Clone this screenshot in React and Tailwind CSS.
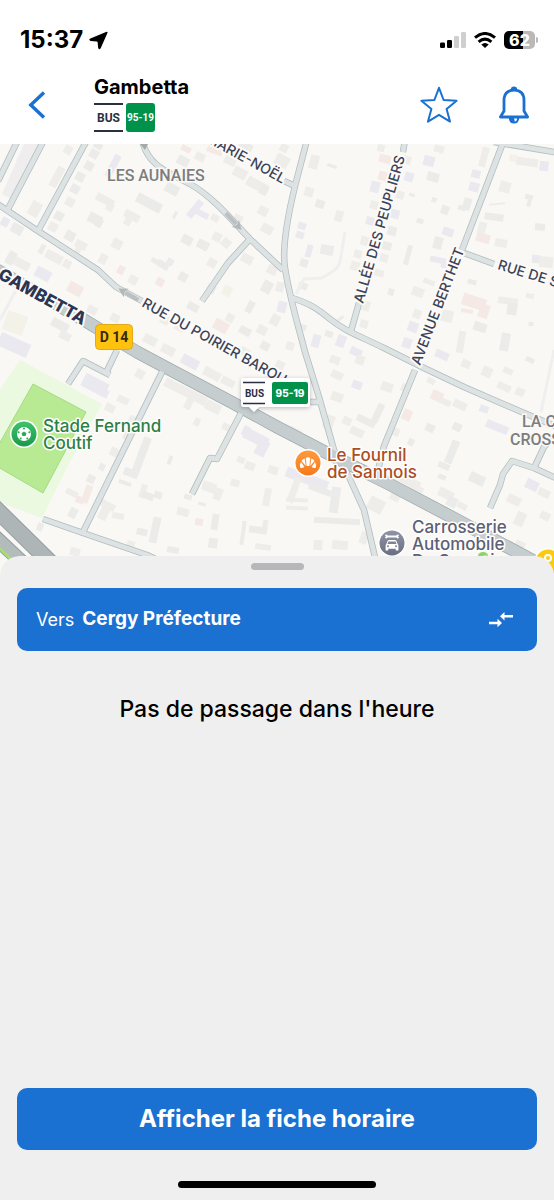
import React, { useState } from "react";

const MAIN_ROAD = "M-10 266 L84 320 L137 352 L167 368 L233 403 L277 427 L327 453 L387 483 L444 513 L530 559 L560 575";

const ROADS = [
    "M-4 203 L38 231 L98 270 L116 287 L142 301",
    "M18 140 L-2 181",
    "M44 140 L8 209",
    "M87 140 L38 231",
    "M142 140 C147 162 160 169 190 184 C215 198 235 224 250 239 L283 270",
    "M250 239 L228 263 L202 301",
    "M307 140 L295 186 C288 215 282 250 285 268 C290 300 300 332 305 352 L319 397 L334 450 L349 477 L364 510 L374 553 L380 580",
    "M292 298 C312 304 320 311 330 319 C345 331 355 334 384 348 L424 368 L464 387 L524 413 L560 428",
    "M405 140 L403 152",
    "M359 303 L351 331",
    "M504 140 L462 250",
    "M415 370 L384 446 L378 470",
    "M494 142 L560 153",
    "M464 253 L494 264",
    "M284 181 L295 186",
    "M163 370 L83 532",
    "M117 350 L106 373",
    "M68 384 L83 361 L110 375",
    "M241 413 L217 459 L210 458 L192 494",
    "M43 519 L83 533 L147 555 L170 566",
    "M309 402 L320 402",
    "M490 508 L500 485 L503 474 L512 461 L534 468 L560 480",
    "M534 468 L544 447 L560 430",
];

const TONES = {
    g: "#ebebe9",
    w: "#efede9",
    l: "#eae9f0",
    p: "#f5e9e6",
    y: "#f3f1e8",
};

// [cx, cy, width, height, angle, tone]
const BUILDINGS = [
    [35, 209, 11, 15, 28, "w"], [57, 177, 8, 22, 28, "w"], [68, 150, 8, 9, 28, "w"], [89, 166, 9, 9, 28, "g"],
    [80, 177, 9, 9, 28, "g"], [75, 189, 9, 9, 28, "g"], [70, 202, 9, 9, 28, "w"], [59, 216, 9, 9, 28, "g"],
    [53, 227, 9, 9, 28, "w"], [94, 154, 9, 9, 28, "g"], [98, 146, 9, 6, 28, "g"], [105, 200, 19, 8, 28, "w"],
    [110, 207, 7, 8, 28, "w"], [149, 203, 27, 10, 28, "g"], [95, 219, 14, 10, 28, "g"], [99, 223, 7, 9, 28, "g"],
    [132, 216, 16, 8, 28, "w"], [128, 221, 7, 9, 28, "w"], [175, 215, 3, 8, 28, "g"], [117, 244, 10, 10, 28, "w"],
    [70, 236, 10, 10, 28, "g"], [81, 245, 12, 8, 28, "w"], [78, 250, 6, 6, 28, "w"], [42, 249, 5, 10, 28, "g"],
    [54, 257, 18, 9, 28, "w"], [67, 264, 8, 8, 28, "w"], [18, 262, 25, 9, 28, "w"], [11, 258, 8, 14, 28, "g"],
    [43, 274, 16, 11, 28, "l"], [17, 229, 12, 10, 28, "g"], [5, 222, 8, 9, 28, "l"], [75, 289, 15, 11, 28, "p"],
    [103, 259, 8, 10, 28, "w"], [121, 270, 7, 9, 28, "p"], [133, 280, 9, 9, 28, "w"], [163, 265, 12, 7, 28, "g"],
    [155, 261, 8, 5, 28, "g"], [170, 262, 7, 7, 28, "g"], [183, 277, 9, 9, 28, "g"], [160, 282, 8, 8, 28, "p"],
    [187, 240, 11, 9, 28, "g"], [203, 245, 12, 9, 28, "g"], [226, 243, 9, 9, 40, "w"], [247, 259, 12, 9, 28, "w"],
    [227, 291, 9, 10, 28, "y"], [211, 289, 9, 9, 28, "w"], [212, 263, 9, 9, 28, "w"], [250, 307, 7, 12, 28, "g"],
    [267, 287, 10, 12, 28, "g"], [272, 270, 10, 9, 28, "w"], [193, 307, 12, 8, 28, "g"], [221, 326, 15, 11, 28, "p"],
    [230, 318, 8, 9, 28, "w"], [245, 331, 12, 8, 28, "g"], [240, 173, 14, 10, 28, "w"], [230, 161, 12, 8, 28, "w"],
    [257, 185, 22, 10, 28, "w"], [264, 190, 8, 10, 28, "g"], [195, 209, 20, 7, -50, "l"], [202, 214, 14, 6, 28, "l"],
    [172, 189, 14, 10, 28, "g"], [183, 161, 12, 9, 28, "g"], [200, 157, 10, 8, 28, "w"], [217, 237, 9, 9, 28, "w"],
    [263, 211, 10, 9, 28, "w"], [267, 229, 12, 9, 28, "w"], [113, 166, 7, 24, 28, "l"], [186, 149, 10, 6, 28, "p"],
    [215, 150, 16, 8, 20, "p"], [246, 146, 14, 7, 28, "g"], [238, 219, 9, 9, 28, "w"], [215, 218, 8, 7, 28, "w"],
    [15, 323, 21, 20, 20, "y"], [14, 345, 32, 14, 24, "l"], [60, 325, 18, 9, 28, "g"], [65, 336, 12, 8, 28, "w"],
    [92, 310, 10, 8, 28, "w"], [115, 318, 9, 8, 28, "w"], [165, 320, 9, 9, 28, "w"], [180, 327, 10, 8, 28, "p"],
    [150, 340, 14, 9, 28, "w"], [168, 350, 14, 9, 28, "w"], [190, 362, 18, 10, 28, "l"], [212, 374, 18, 9, 28, "w"],
    [228, 382, 14, 8, 28, "w"], [245, 352, 10, 8, 28, "w"], [262, 330, 10, 9, 28, "w"], [265, 346, 9, 8, 28, "g"],
    [280, 365, 9, 8, 28, "w"], [275, 320, 9, 11, 28, "w"], [314, 162, 9, 14, 15, "w"], [332, 166, 10, 3, 18, "g"],
    [309, 192, 9, 9, 18, "w"], [320, 204, 9, 8, 18, "g"], [339, 216, 8, 11, 15, "w"], [375, 187, 9, 11, 15, "l"],
    [302, 226, 8, 7, 18, "l"], [300, 235, 8, 7, 18, "l"], [327, 250, 13, 10, 10, "g"], [309, 251, 6, 13, 15, "l"],
    [304, 263, 8, 8, 18, "g"], [282, 161, 14, 12, 28, "w"], [284, 148, 8, 8, 28, "w"], [385, 159, 12, 8, 15, "p"],
    [383, 176, 9, 9, 15, "p"], [381, 148, 7, 7, 15, "w"], [409, 177, 9, 9, 15, "l"], [407, 160, 8, 8, 15, "w"],
    [400, 195, 8, 8, 15, "w"], [412, 195, 6, 3, 15, "g"], [374, 205, 8, 8, 15, "w"], [395, 214, 9, 9, 15, "l"],
    [370, 221, 8, 8, 15, "l"], [392, 231, 9, 9, 15, "g"], [365, 241, 9, 9, 15, "w"], [387, 246, 9, 8, 15, "g"],
    [358, 254, 8, 8, 15, "w"], [384, 258, 8, 8, 15, "w"], [355, 266, 9, 9, 15, "w"], [379, 273, 10, 7, 15, "w"],
    [429, 161, 11, 10, 15, "l"], [439, 149, 10, 7, 15, "w"], [433, 177, 12, 9, 15, "g"], [434, 200, 5, 5, 15, "g"],
    [445, 210, 8, 9, 20, "g"], [420, 221, 7, 5, 15, "g"], [448, 232, 11, 8, 20, "l"], [438, 243, 9, 12, 15, "g"],
    [438, 260, 16, 6, 12, "l"], [444, 265, 6, 6, 12, "l"], [408, 255, 5, 20, 15, "g"], [391, 292, 6, 7, 15, "g"],
    [418, 292, 12, 9, 20, "w"], [429, 282, 12, 5, 20, "w"], [474, 187, 10, 9, 15, "l"], [476, 174, 9, 8, 15, "l"],
    [484, 157, 7, 20, 15, "w"], [467, 204, 8, 12, 18, "g"], [462, 208, 8, 5, 18, "g"], [544, 166, 9, 10, 5, "l"],
    [527, 162, 22, 8, 8, "w"], [513, 158, 7, 7, 8, "y"], [505, 187, 11, 11, 15, "w"], [529, 197, 8, 5, 15, "g"],
    [529, 203, 4, 7, 15, "g"], [497, 204, 16, 2, -5, "w"], [494, 217, 19, 7, 8, "g"], [540, 227, 10, 7, 5, "g"],
    [483, 238, 14, 9, 15, "p"], [482, 228, 8, 12, 15, "w"], [501, 243, 12, 8, 10, "w"], [536, 259, 8, 8, 5, "l"],
    [546, 262, 14, 11, 5, "w"], [472, 282, 9, 5, 15, "g"], [474, 302, 24, 12, 18, "p"], [484, 311, 10, 14, 18, "p"],
    [467, 311, 12, 4, 10, "p"], [508, 301, 20, 7, 8, "w"], [512, 309, 10, 12, 8, "g"], [480, 327, 13, 9, 18, "g"],
    [505, 342, 9, 18, 10, "g"], [461, 342, 7, 22, 10, "w"], [530, 296, 8, 5, 10, "w"], [531, 324, 5, 4, 10, "g"],
    [417, 314, 8, 9, 20, "w"], [413, 327, 10, 10, 20, "l"], [407, 343, 9, 10, 20, "l"], [447, 316, 12, 12, 15, "w"],
    [364, 324, 8, 8, 15, "w"], [366, 306, 8, 10, 15, "w"], [303, 286, 9, 7, 20, "g"], [302, 327, 9, 6, 20, "g"],
    [316, 341, 8, 13, 15, "l"], [341, 341, 9, 12, 20, "l"], [329, 334, 8, 6, 20, "g"], [340, 319, 9, 3, -40, "g"],
    [282, 307, 9, 11, 15, "l"], [280, 287, 8, 10, 15, "w"], [290, 346, 8, 8, 20, "w"], [356, 352, 12, 8, 25, "l"],
    [95, 385, 26, 14, 27, "l"], [104, 393, 9, 8, 27, "l"], [123, 400, 12, 7, 27, "w"], [110, 408, 10, 8, 27, "w"],
    [140, 374, 9, 9, 27, "w"], [133, 420, 9, 8, 27, "w"], [128, 436, 9, 9, 27, "p"], [174, 386, 20, 9, 27, "w"],
    [194, 396, 27, 9, 27, "w"], [213, 407, 16, 10, 27, "w"], [189, 403, 7, 13, 27, "w"], [197, 422, 6, 8, 27, "w"],
    [226, 427, 8, 7, 27, "w"], [256, 438, 26, 11, 27, "l"], [262, 448, 11, 16, 27, "l"], [246, 431, 7, 10, 27, "l"],
    [145, 446, 8, 18, 20, "g"], [139, 462, 8, 24, 20, "g"], [131, 473, 15, 8, 20, "g"], [125, 483, 13, 4, 20, "g"],
    [170, 460, 4, 9, 20, "g"], [102, 467, 6, 7, 27, "g"], [91, 479, 8, 8, 27, "g"], [114, 452, 8, 9, 27, "w"],
    [72, 493, 13, 6, 27, "w"], [87, 494, 7, 18, 20, "p"], [80, 500, 9, 7, 20, "p"], [73, 513, 8, 10, 27, "g"],
    [40, 527, 6, 8, 20, "g"], [107, 505, 17, 7, 27, "w"], [104, 513, 9, 14, 27, "w"], [118, 516, 12, 6, 10, "w"],
    [143, 491, 6, 14, 20, "w"], [148, 496, 12, 7, 20, "g"], [158, 495, 8, 7, 20, "g"], [155, 530, 8, 26, 12, "g"],
    [142, 532, 11, 7, 12, "g"], [188, 497, 8, 5, 15, "g"], [202, 504, 8, 3, 15, "g"], [183, 512, 12, 8, 15, "w"],
    [199, 522, 8, 7, 8, "p"], [215, 522, 7, 16, 8, "g"], [213, 543, 9, 10, 8, "g"], [243, 533, 4, 24, 8, "g"],
    [258, 530, 18, 7, 8, "g"], [265, 526, 5, 12, 8, "g"], [263, 547, 16, 6, 8, "w"], [209, 487, 14, 10, 20, "w"],
    [218, 494, 8, 12, 20, "w"], [235, 483, 9, 7, 15, "w"], [250, 466, 10, 8, 20, "w"], [267, 497, 7, 18, 10, "w"],
    [173, 550, 12, 6, 10, "g"], [75, 552, 10, 8, 15, "w"], [131, 544, 8, 6, 15, "w"], [241, 460, 8, 6, 20, "w"],
    [273, 470, 10, 8, 20, "w"], [337, 375, 12, 8, 27, "w"], [357, 385, 10, 8, 20, "l"], [337, 397, 12, 9, 20, "w"],
    [335, 360, 10, 8, 20, "w"], [360, 360, 9, 9, 20, "w"], [387, 387, 12, 9, 20, "w"], [366, 421, 20, 7, 25, "g"],
    [378, 413, 7, 20, 25, "g"], [357, 432, 14, 8, 25, "w"], [347, 421, 9, 8, 25, "w"], [407, 415, 9, 11, 25, "p"],
    [430, 428, 9, 8, 25, "g"], [457, 427, 9, 8, 25, "g"], [437, 396, 12, 10, 25, "p"], [445, 402, 12, 6, 25, "w"],
    [460, 405, 14, 8, 25, "w"], [484, 409, 9, 7, 20, "l"], [497, 427, 23, 8, 22, "l"], [411, 442, 6, 7, 25, "g"],
    [396, 432, 7, 8, 25, "w"], [452, 452, 8, 24, 22, "g"], [444, 466, 12, 6, 22, "g"], [442, 477, 8, 5, 22, "g"],
    [477, 479, 16, 10, 25, "g"], [532, 485, 13, 10, 25, "l"], [514, 500, 14, 9, 25, "w"], [544, 493, 12, 8, 25, "w"],
    [520, 519, 10, 14, 25, "w"], [545, 516, 10, 8, 25, "w"], [487, 372, 10, 10, 25, "w"], [504, 387, 14, 7, 25, "w"],
    [466, 364, 9, 8, 25, "w"], [442, 355, 14, 8, 25, "l"], [530, 360, 9, 5, 25, "g"], [508, 371, 10, 6, 25, "w"],
    [520, 392, 9, 8, 25, "w"], [431, 381, 8, 6, 25, "w"], [307, 479, 44, 10, 20, "l"], [294, 490, 7, 26, 20, "w"],
    [320, 490, 24, 6, 20, "g"], [335, 500, 9, 26, 8, "g"], [337, 521, 46, 6, 3, "g"], [297, 500, 22, 4, 3, "w"],
    [297, 508, 22, 4, 3, "w"], [376, 505, 16, 14, 27, "w"], [395, 497, 10, 8, 27, "w"], [408, 481, 26, 9, 27, "w"],
    [416, 490, 14, 10, 27, "w"], [446, 494, 16, 9, 27, "w"], [452, 502, 10, 10, 27, "g"], [462, 506, 10, 6, 27, "w"],
    [329, 422, 10, 14, 20, "w"], [340, 545, 16, 9, 5, "w"], [318, 545, 9, 10, 5, "w"], [364, 538, 8, 12, 20, "w"],
    [405, 388, 8, 8, 25, "w"], [288, 396, 9, 9, 20, "w"], [295, 432, 12, 8, 27, "w"], [520, 545, 10, 8, 25, "w"],
];

const STREETS = [
    { name: "RUE DU POIRIER BAROU", x: 141, y: 306, angle: 29 },
    { name: "ALLÉE DES PEUPLIERS", x: 363, y: 304, angle: -74 },
    { name: "AVENUE BERTHET", x: 420, y: 366, angle: -69 },
    { name: "RUE DE S", x: 497, y: 269, angle: 17 },
    { name: "MARIE-NOËL", x: 205, y: 141, angle: 29 },
];

function DirectionArrow({ x, y, angle }) {
    return (
        <g transform={`translate(${x} ${y}) rotate(${angle})`} fill="#b4b8b8">
            <path d="M-12 -2 H3 V2 H-12 Z" opacity="0.8" />
            <path d="M2 -5 L11 0 L2 5 L4 0 Z" />
        </g>
    );
}

function Poi({ x, y, color, labelX, labelY, lines, textColor, children }) {
    return (
        <g>
            <circle cx={x} cy={y} r="14" fill="#fff" />
            <circle cx={x} cy={y} r="12.5" fill={color} />
            <g transform={`translate(${x} ${y})`}>{children}</g>
            <text
                fill={textColor}
                stroke="#fffefb"
                strokeWidth="3"
                strokeLinejoin="round"
                paintOrder="stroke"
                className="text-[17px] font-medium"
            >
                {lines.map((line, i) => (
                    <tspan key={line} x={labelX} y={labelY + i * 17}>{line}</tspan>
                ))}
            </text>
        </g>
    );
}

function StopMap() {
    return (
        <svg
            viewBox="0 144 554 432"
            preserveAspectRatio="xMidYMin slice"
            className="block h-full w-full font-[Inter,sans-serif]"
            role="img"
            aria-label="Plan du quartier"
        >
            <defs>
                <linearGradient id="stade" x1="0" y1="0" x2="0" y2="1">
                    <stop offset="0" stopColor="#3fc26b" />
                    <stop offset="1" stopColor="#189a4a" />
                </linearGradient>
                <linearGradient id="fournil" x1="0" y1="0" x2="0" y2="1">
                    <stop offset="0" stopColor="#ff9a3c" />
                    <stop offset="1" stopColor="#f47a1c" />
                </linearGradient>
                <linearGradient id="garage" x1="0" y1="0" x2="0" y2="1">
                    <stop offset="0" stopColor="#8f94a6" />
                    <stop offset="1" stopColor="#696e82" />
                </linearGradient>
                <filter id="ombre" x="-20%" y="-20%" width="140%" height="160%">
                    <feDropShadow dx="0" dy="1" stdDeviation="2" floodOpacity="0.25" />
                </filter>
            </defs>

            <rect x="-600" y="144" width="1800" height="432" fill="#f9f8f5" />

            {/* Stade */}
            <path d="M-2 392 L20 360 L102 404 L70 462 L42 518 L-2 502 Z" fill="#ebf9e1" />
            <path d="M33 384 L86 412 L43 493 L-2 467 L-2 446 Z" fill="#b8ea93" stroke="#a5da83" strokeWidth="1" />

            {/* Bâtiments */}
            <path d="M24 144 H40 L13 200 L2 194 Z" fill="#f0edef" />
            {BUILDINGS.map(([cx, cy, w, h, angle, tone], i) => (
                <rect
                    key={i}
                    x={cx - w / 2}
                    y={cy - h / 2}
                    width={w}
                    height={h}
                    fill={TONES[tone]}
                    transform={`rotate(${angle} ${cx} ${cy})`}
                />
            ))}
            <path d="M345 232 L340 262 Q338 269 330 273 L322 278 L304 279 L296 294" fill="none" stroke="#efeff0" strokeWidth="3" />
            <path d="M554 350 L541 412 M0 320 L16 290" fill="none" stroke="#f0eff0" strokeWidth="3" />

            {/* Rues */}
            <g fill="none" strokeLinejoin="round">
                <path d="M-6 507 L50 562" stroke="#949ea1" strokeWidth="17" />
                <path d="M-6 507 L50 562" stroke="#aeb5b6" strokeWidth="15" />
                <path d="M-6 536 L26 566" stroke="#949ea1" strokeWidth="15" />
                <path d="M-6 536 L26 566" stroke="#b4bbbc" strokeWidth="13" />
                <path d="M-6 543 L14 562" stroke="#a5dd77" strokeWidth="3" />
                <g stroke="#b0bcc1" strokeWidth="6.5">
                    {ROADS.map((d) => <path key={d} d={d} />)}
                </g>
                <path d={MAIN_ROAD} stroke="#a0adb1" strokeWidth="13" />
                <g stroke="#dde2e2" strokeWidth="5">
                    {ROADS.map((d) => <path key={d} d={d} />)}
                </g>
                <path d={MAIN_ROAD} stroke="#c5cdce" strokeWidth="11.5" />
            </g>

            <DirectionArrow x={234} y={222} angle={47} />
            <DirectionArrow x={128} y={294} angle={210} />
            <path d="M140 144 H148 L145 150 Z" fill="#a4a8a8" />

            {/* Noms de rues */}
            <g
                fill="#3b4257"
                stroke="#fbfaf7"
                strokeWidth="4"
                strokeLinejoin="round"
                paintOrder="stroke"
                className="text-[14px] font-medium"
            >
                {STREETS.map((s) => (
                    <text key={s.name} transform={`translate(${s.x} ${s.y}) rotate(${s.angle})`}>{s.name}</text>
                ))}
                <text
                    transform="translate(-3 278) rotate(29)"
                    fill="#2c3552"
                    className="text-[17px] font-extrabold"
                >
                    GAMBETTA
                </text>
            </g>

            <g
                fill="#7d7d7e"
                stroke="#faf9f6"
                strokeWidth="3"
                paintOrder="stroke"
                className="font-[Roboto,sans-serif] text-[16px] font-medium"
            >
                <text x="107" y="181">LES AUNAIES</text>
                <text x="522" y="427">LA CROIX</text>
                <text x="510" y="445">CROSSE</text>
            </g>

            {/* D 14 */}
            <rect x="95.5" y="324.5" width="37" height="25" rx="4" fill="#ffc20e" stroke="#e2a91b" />
            <text x="114" y="342" textAnchor="middle" fill="#352b14" className="font-[Roboto,sans-serif] text-[14px] font-bold">D 14</text>

            {/* Points d'intérêt */}
            <Poi x={24} y={434} color="url(#stade)" labelX={43} labelY={432} lines={["Stade Fernand", "Coutif"]} textColor="#2c8049">
                <circle r="7" fill="#fff" />
                <path d="M0 -2.6 L2.5 -0.8 L1.5 2.1 H-1.5 L-2.5 -0.8 Z" fill="#27ab57" />
                <g fill="#27ab57">
                    <circle cx="0" cy="-5.6" r="1" />
                    <circle cx="5.3" cy="-1.7" r="1" />
                    <circle cx="3.3" cy="4.5" r="1" />
                    <circle cx="-3.3" cy="4.5" r="1" />
                    <circle cx="-5.3" cy="-1.7" r="1" />
                </g>
            </Poi>
            <Poi x={308} y={463} color="url(#fournil)" labelX={327} labelY={461} lines={["Le Fournil", "de Sannois"]} textColor="#ab4d25">
                <path d="M-2.2 -5 Q0 -6.4 2.2 -5 L1.4 3 H-1.4 Z" fill="#fff" />
                <path d="M-3.2 -4.6 Q-6 -4 -6.4 -2 L-2.3 3 Z M3.2 -4.6 Q6 -4 6.4 -2 L2.3 3 Z" fill="#fff" />
                <path d="M-7 -1 Q-9 2 -7.6 5 Q-5.5 5.4 -3.6 4 Z M7 -1 Q9 2 7.6 5 Q5.5 5.4 3.6 4 Z" fill="#fff" />
            </Poi>
            <ellipse cx="483" cy="556" rx="5" ry="4" fill="#8bd468" />
            <Poi x={392} y={543} color="url(#garage)" labelX={412} labelY={533} lines={["Carrosserie", "Automobile", "De Sannois"]} textColor="#5c6078">
                <path d="M-4.6 -1.8 Q-4 -3 -2.6 -3 H2.6 Q4 -3 4.6 -1.8 L5.6 1 Q6.4 1.6 6.4 2.6 V7.4 H3.8 V5.8 H-3.8 V7.4 H-6.4 V2.6 Q-6.4 1.6 -5.6 1 Z" fill="#fff" />
                <path d="M-3.6 -1.4 H3.6 L4.4 0.9 H-4.4 Z" fill="#7d8296" />
                <circle cx="-4" cy="3.2" r="1" fill="#7d8296" />
                <circle cx="4" cy="3.2" r="1" fill="#7d8296" />
                <path d="M-6.5 -8 L-4.5 -6.5 L-6.5 -5 M6.5 -8 L4.5 -6.5 L6.5 -5 M-4.5 -6.5 H4.5" fill="none" stroke="#fff" strokeWidth="1.8" />
            </Poi>
            <circle cx="548" cy="562" r="14" fill="#fff" />
            <circle cx="548" cy="562" r="12.5" fill="#fbcb12" />
            <circle cx="548" cy="558" r="3" fill="none" stroke="#fff" strokeWidth="2" />

            {/* Arrêt */}
            <g filter="url(#ombre)">
                <path d="M244 378 H307 Q310 378 310 381 V404 Q310 407 307 407 H259 L254 412 L249 407 H244 Q241 407 241 404 V381 Q241 378 244 378 Z" fill="#fff" />
            </g>
            <path d="M243 382.5 H265 M243 403.5 H265" stroke="#2b2f42" strokeWidth="1.5" />
            <text x="254.5" y="397" textAnchor="middle" fill="#2b2f42" className="font-[Roboto,sans-serif] text-[10px] font-bold">BUS</text>
            <rect x="272" y="382" width="36" height="22" rx="2" fill="#00914a" />
            <text x="290" y="397" textAnchor="middle" fill="#fff" className="text-[10px] font-extrabold">95-19</text>
        </svg>
    );
}

function StatusBar() {
    return (
        <div className="flex items-center justify-between pt-6 pr-4 pl-5">
            <div className="flex items-center gap-1.5">
                <span className="text-[24px] leading-8 font-bold">15:37</span>
                <svg viewBox="0 0 19 19" className="size-[19px]" fill="currentColor">
                    <path d="M17 0.9 Q19.2 0.2 18.3 2.2 L11.8 17 Q10.4 19.4 9.2 17 L8.6 11.2 Q8.5 10.5 7.8 10.4 L1.6 10 Q-0.9 8.9 1.4 7.6 Z" />
                </svg>
            </div>
            <div className="flex items-center gap-2">
                <svg viewBox="0 0 26 16" className="h-4 w-[26px]">
                    <rect x="0" y="10.5" width="5" height="5.5" rx="1.3" />
                    <rect x="7" y="8" width="5" height="8" rx="1.3" />
                    <rect x="14" y="4" width="5" height="12" rx="1.3" fill="#cfcfcf" />
                    <rect x="21" y="0" width="5" height="16" rx="1.3" fill="#cfcfcf" />
                </svg>
                <svg viewBox="0 0 22 16" className="h-4 w-[22px]" fill="none" stroke="#000" strokeWidth="3">
                    <path d="M1 5.7 Q11 -2.7 21 5.7" />
                    <path d="M4.6 9.8 Q11 4.4 17.4 9.8" />
                    <path d="M11 16 L7.3 12.4 Q11 9.4 14.7 12.4 Z" fill="#000" stroke="none" />
                </svg>
                <div className="flex items-center gap-px">
                    <div className="flex h-[18px] w-[31px] items-center justify-center rounded-[5px] bg-linear-to-r from-black from-62% to-[#b9b9b9] to-62% text-[16px] font-extrabold text-white">
                        62
                    </div>
                    <div className="h-1.5 w-0.5 rounded-r bg-[#b9b9b9]" />
                </div>
            </div>
        </div>
    );
}

function Header({ favorite, onFavorite }) {
    return (
        <header className="bg-white">
            <StatusBar />
            <div className="flex items-center pt-4 pr-6 pb-3 pl-7">
                <button type="button" aria-label="Retour" className="mt-1.5 text-[#1a71d2]">
                    <svg viewBox="0 0 18 28" className="h-7 w-[18px]" fill="none" stroke="currentColor" strokeWidth="3.4">
                        <path d="M16 1.5 L2.8 14 L16 26.5" />
                    </svg>
                </button>
                <div className="ml-12 grow">
                    <h1 className="text-[20px] leading-[31px] font-bold">Gambetta</h1>
                    <div className="flex gap-[3px] font-[Roboto,sans-serif] font-bold">
                        <span className="flex h-[29px] w-[29px] items-center justify-center border-y-2 border-[#2b2f42] text-[12px] text-[#2b2f42]">BUS</span>
                        <span className="flex h-[29px] w-[29px] items-center justify-center rounded-[3px] bg-[#00914a] text-[10px] text-white">95-19</span>
                    </div>
                </div>
                <div className="mt-1.5 flex items-center gap-10 text-[#1a71d2]">
                    <button type="button" aria-label="Ajouter aux favoris" aria-pressed={favorite} onClick={onFavorite}>
                        <svg viewBox="0 0 38 38" className="size-[38px]" fill={favorite ? "currentColor" : "none"} stroke="currentColor" strokeWidth="2" strokeLinejoin="round">
                            <path d="M19 1.8 L23.6 14 L36.6 14.8 L26.6 23 L30 35.6 L19 28.8 L8 35.6 L11.4 23 L1.4 14.8 L14.4 14 Z" />
                        </svg>
                    </button>
                    <button type="button" aria-label="Alertes">
                        <svg viewBox="0 0 32 38" className="h-[38px] w-8" fill="none" stroke="currentColor" strokeWidth="2.8">
                            <path d="M6 25 V14.5 Q6 4.2 16 4.2 Q26 4.2 26 14.5 V25 L29.6 31 H2.4 Z" strokeLinejoin="round" />
                            <path d="M12.8 3.8 Q12.8 0.5 16 0.5 Q19.2 0.5 19.2 3.8 Z" fill="currentColor" stroke="none" />
                            <path d="M11.8 32 Q12 36.6 16 36.6 Q20 36.6 20.2 32" strokeWidth="2" />
                            <path d="M12 32 H16 L17 36.6 Q12.4 36.4 12 32 Z" fill="currentColor" stroke="none" />
                        </svg>
                    </button>
                </div>
            </div>
        </header>
    );
}

export default function App() {
    const [favorite, setFavorite] = useState(false);

    return (
        <div className="flex min-h-screen flex-col bg-white font-[Inter,sans-serif] text-black">
            <Header favorite={favorite} onFavorite={() => setFavorite(!favorite)} />

            <div className="h-[432px] shrink-0 overflow-hidden">
                <StopMap />
            </div>

            <main className="relative -mt-5 flex grow flex-col rounded-t-[20px] bg-[#efefef] px-[17px] pt-[7px] pb-3">
                <div className="h-[7px] w-[53px] self-center rounded-full bg-[#b7b7b9]" />

                <button type="button" className="mt-[18px] flex h-[63px] items-center rounded-[10px] bg-[#1a71d2] pr-6 pl-[19px] text-[18px] text-white">
                    <span>Vers</span>
                    <span className="ml-2 text-[19px] font-bold">Cergy Préfecture</span>
                    <svg viewBox="0 0 24 16" className="ml-auto h-4 w-6" fill="currentColor">
                        <path d="M0 9.7 H8.5 V6.7 L13 11 L8.5 15.3 V12.3 H0 Z" />
                        <path d="M24 3 H15.5 V0 L11 4.3 L15.5 8.6 V5.6 H24 Z" />
                    </svg>
                </button>

                <p className="mt-10 text-center text-[23px] leading-9 font-medium">Pas de passage dans l'heure</p>

                <button type="button" className="mt-auto h-[62px] rounded-[10px] bg-[#1a71d2] text-[24px] font-bold text-white">
                    Afficher la fiche horaire
                </button>

                <div className="mt-[31px] h-[7px] w-[198px] self-center rounded-full bg-black" />
            </main>
        </div>
    );
}
